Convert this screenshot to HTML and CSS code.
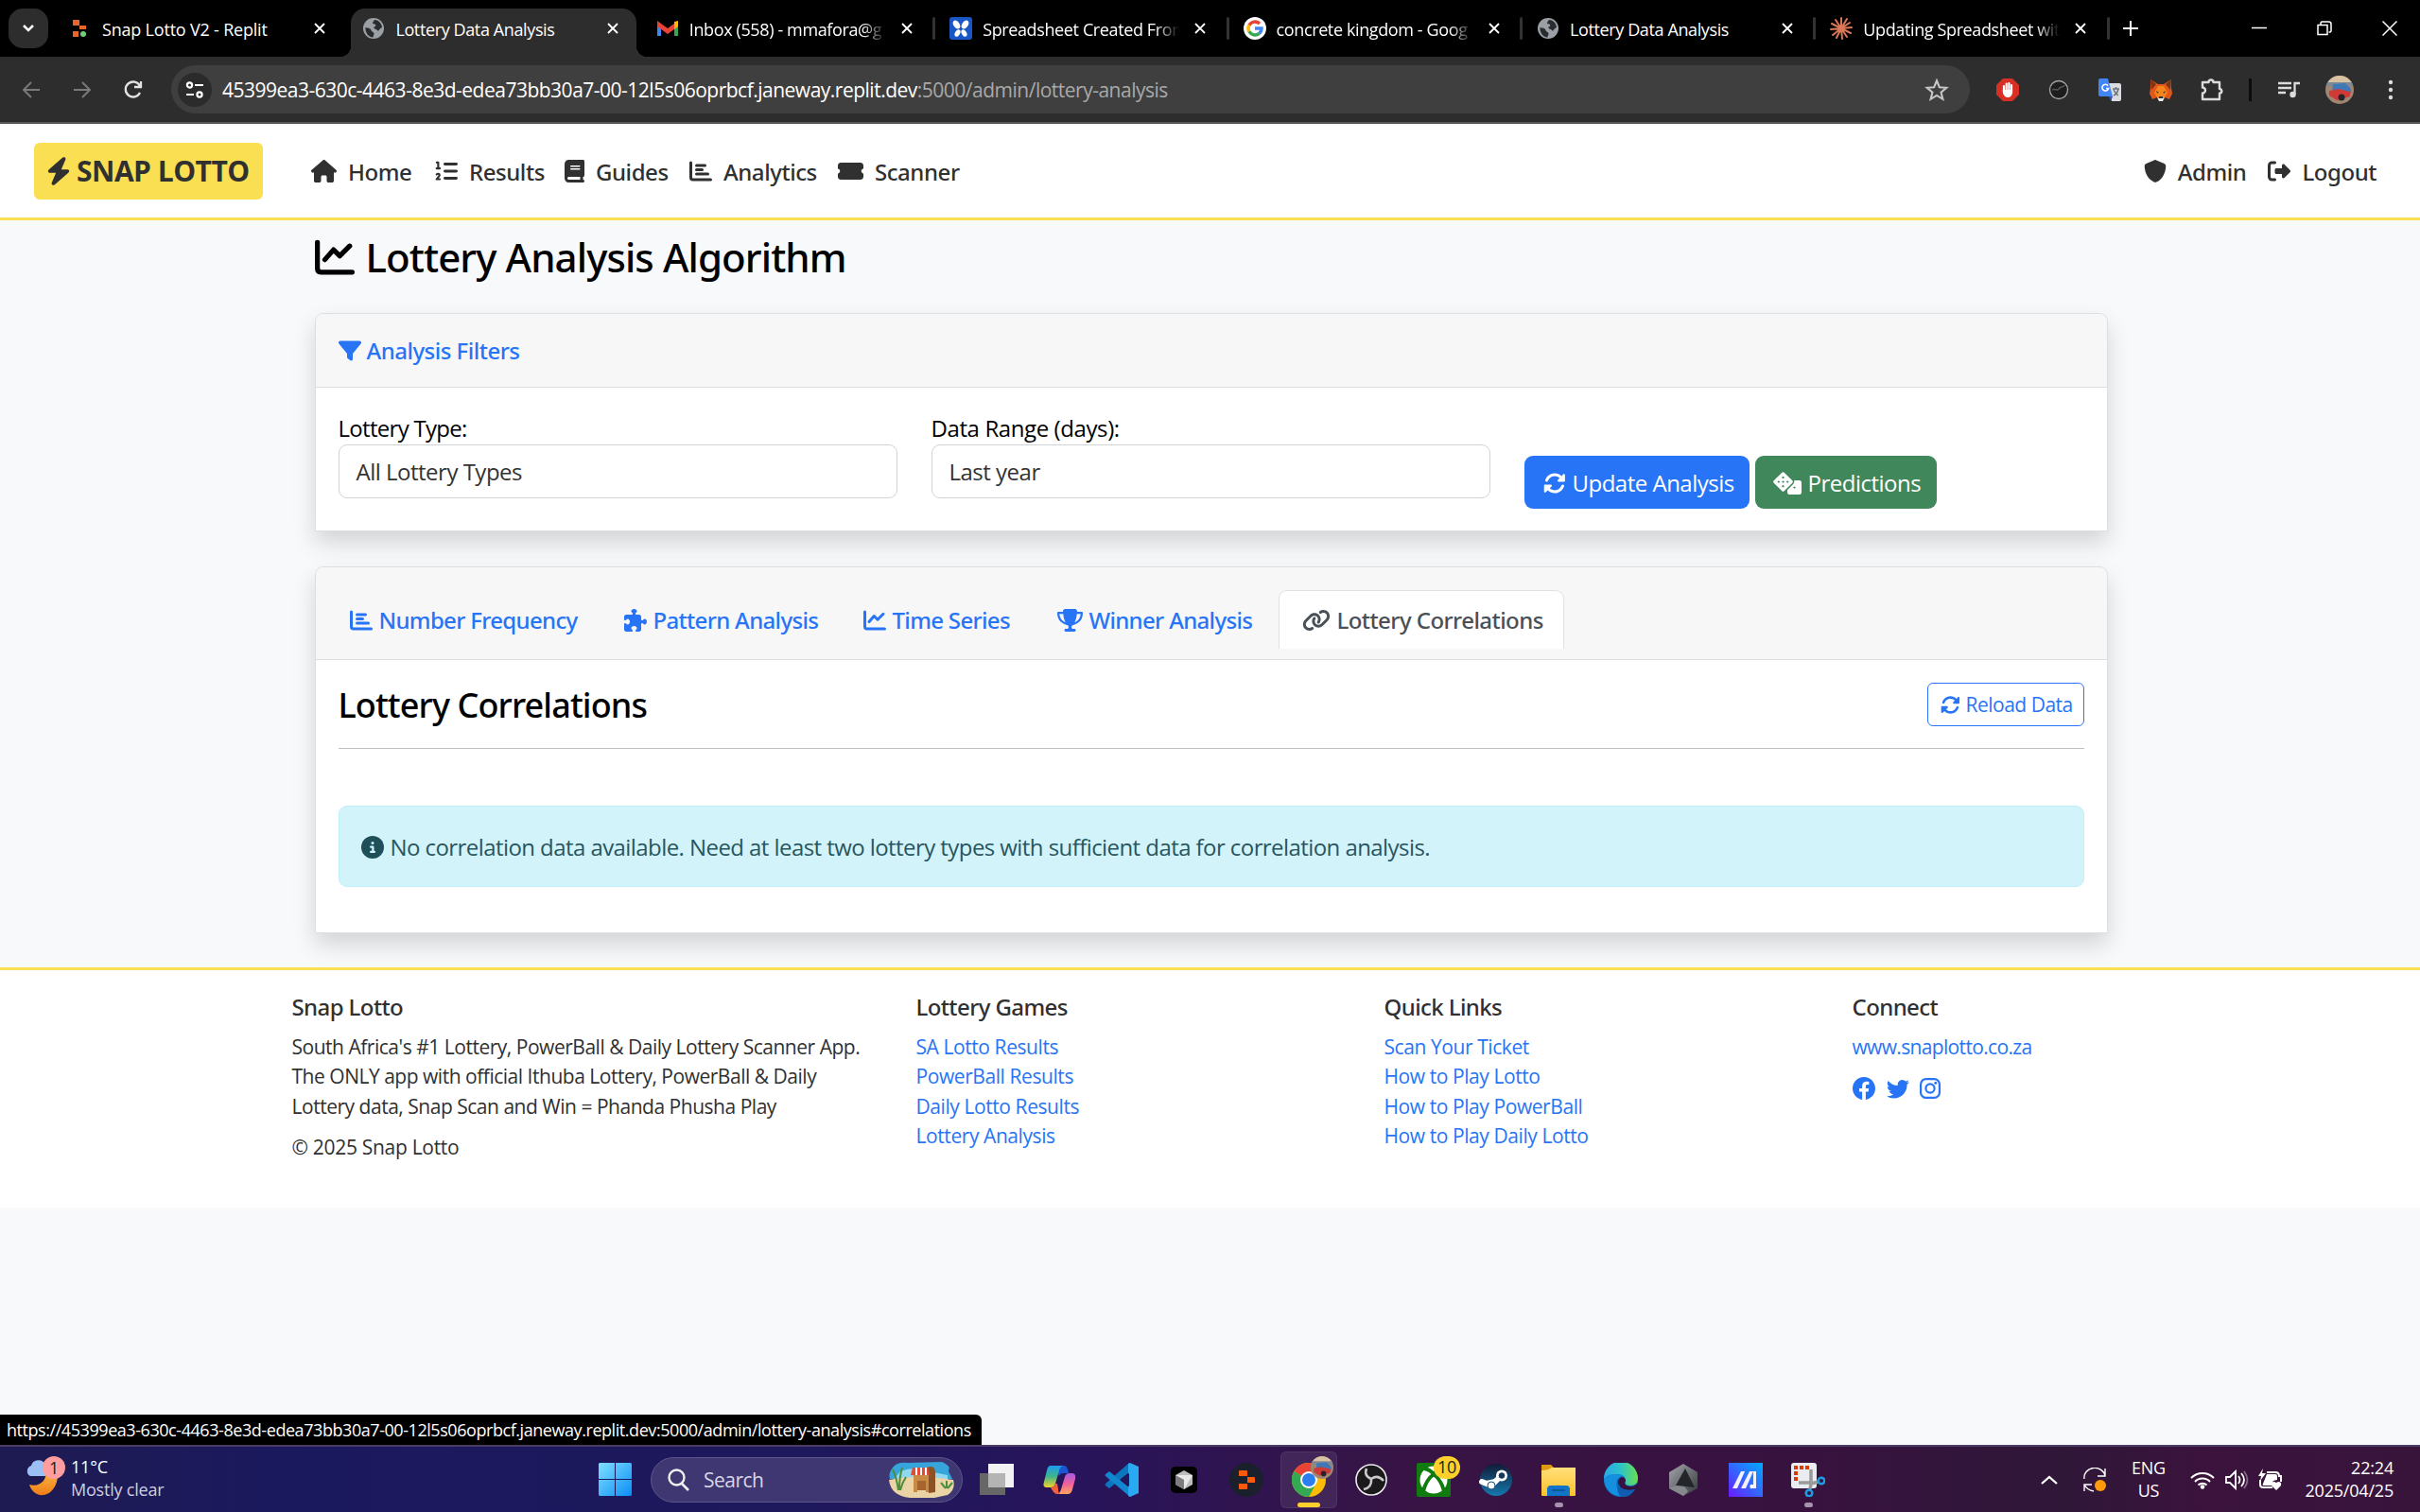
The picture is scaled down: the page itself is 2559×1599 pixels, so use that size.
FILE: index.html
```html
<!DOCTYPE html>
<html lang="en">
<head>
<meta charset="utf-8">
<title>Lottery Data Analysis</title>
<link rel="stylesheet" href="styles.css">
</head>
<body>
<svg class="defs" aria-hidden="true">
  <defs>
    <linearGradient id="g-win" x1="0" y1="0" x2="1" y2="1"><stop offset="0" stop-color="#7fe0ff"/><stop offset="1" stop-color="#0a8ef5"/></linearGradient>
    <linearGradient id="g-moon" x1="0" y1="0" x2="0" y2="1"><stop offset="0" stop-color="#fdc04a"/><stop offset="1" stop-color="#ee7d18"/></linearGradient>
    <linearGradient id="g-cop1" x1="0" y1="0" x2="0" y2="1"><stop offset="0" stop-color="#1b9df0"/><stop offset=".5" stop-color="#3fb68a"/><stop offset="1" stop-color="#f2d328"/></linearGradient>
    <linearGradient id="g-cop2" x1="0" y1="0" x2="0" y2="1"><stop offset="0" stop-color="#a55ae8"/><stop offset=".5" stop-color="#f0609e"/><stop offset="1" stop-color="#ffa35c"/></linearGradient>
    <linearGradient id="g-folder" x1="0" y1="0" x2="0" y2="1"><stop offset="0" stop-color="#ffe07a"/><stop offset="1" stop-color="#ffc02a"/></linearGradient>
    <linearGradient id="g-edge" x1="0" y1="0" x2="1" y2="0"><stop offset="0" stop-color="#2aa7e8"/><stop offset=".5" stop-color="#2cc3c8"/><stop offset="1" stop-color="#6be04d"/></linearGradient>
    <linearGradient id="g-steam" x1="0" y1="0" x2="0" y2="1"><stop offset="0" stop-color="#111b35"/><stop offset="1" stop-color="#1579ad"/></linearGradient>
    <linearGradient id="g-asus" x1="0" y1="1" x2="1" y2="0"><stop offset="0" stop-color="#6a19ff"/><stop offset=".5" stop-color="#3368ff"/><stop offset="1" stop-color="#00aaff"/></linearGradient>
    <linearGradient id="g-arm" x1="0" y1="0" x2="1" y2="1"><stop offset="0" stop-color="#a4a8ad"/><stop offset="1" stop-color="#34373b"/></linearGradient>
    <symbol id="bolt" viewBox="0 0 448 512"><path d="M349.4 44.6c5.900-13.700 1.500-29.700-10.600-38.500s-28.600-8-39.900 1.800l-256 224c-10 8.800-13.600 22.900-8.900 35.300S50.700 288 64 288H175.500L98.600 467.400c-5.900 13.700-1.500 29.700 10.600 38.500s28.600 8 39.900-1.800l256-224c10-8.800 13.600-22.900 8.900-35.300s-16.600-20.700-30-20.700H272.500L349.400 44.600z"/></symbol>
    <symbol id="home" viewBox="0 0 576 512"><path d="M575.8 255.5c0 18-15 32.100-32 32.100h-32l.7 160.200c0 2.700-.2 5.400-.5 8.100V472c0 22.100-17.900 40-40 40H392c-22.100 0-40-17.900-40-40V384c0-17.700-14.300-32-32-32H256c-17.700 0-32 14.300-32 32v88c0 22.100-17.900 40-40 40H104c-22.100 0-40-17.900-40-40V287.600H32c-18 0-32-14-32-32.100c0-9 3-17 10-24L266.400 8c7-7 15-8 22-8s15 2 21 7L564.800 231.500c8 7 12 15 11 24z"/></symbol>
    <symbol id="list" viewBox="0 0 512 512"><g fill="none" stroke="currentColor" stroke-linecap="round" stroke-linejoin="round"><path stroke-width="62" d="M223 96h257M223 256h257M223 416h257"/><path stroke-width="46" d="M40 60h32v128M36 194h74M38 330c14-22 66-20 64 14c0 26-44 58-66 94h72"/></g></symbol>
    <symbol id="book" viewBox="0 0 448 512"><path fill-rule="evenodd" d="M96 0C43 0 0 43 0 96V416c0 53 43 96 96 96H416c17.700 0 32-14.300 32-32s-14.300-32-32-32V384c17.700 0 32-14.300 32-32V32c0-17.700-14.300-32-32-32H96zm0 384H352v64H96c-17.700 0-32-14.300-32-32s14.300-32 32-32zm48-256H336a16 16 0 0 1 0 32H144a16 16 0 0 1 0-32zm0 64H336a16 16 0 0 1 0 32H144a16 16 0 0 1 0-32z"/></symbol>
    <symbol id="bars" viewBox="0 0 512 512"><path fill="none" stroke="currentColor" stroke-width="64" stroke-linecap="round" stroke-linejoin="round" d="M32 64V400q0 48 48 48H480M160 128H352M160 224H288M160 320H416"/></symbol>
    <symbol id="line" viewBox="0 0 512 512"><path fill="none" stroke="currentColor" stroke-width="64" stroke-linecap="round" stroke-linejoin="round" d="M32 64V400q0 48 48 48H480M128 288L240 160L320 240L448 112"/></symbol>
    <symbol id="ticket" viewBox="0 0 576 512"><path d="M64 64C28.700 64 0 92.700 0 128v64c0 8.800 7.400 15.700 15.700 18.600C34.500 217.100 48 235 48 256s-13.500 38.900-32.300 45.400C7.400 304.300 0 311.200 0 320v64c0 35.300 28.700 64 64 64H512c35.300 0 64-28.700 64-64V320c0-8.800-7.400-15.700-15.700-18.600C541.500 294.900 528 277 528 256s13.500-38.900 32.300-45.400c8.300-2.900 15.700-9.800 15.700-18.600V128c0-35.300-28.700-64-64-64H64z"/></symbol>
    <symbol id="shield" viewBox="0 0 512 512"><path d="M256 0c4.600 0 9.200 1 13.400 2.900L457.700 82.800c22 9.300 38.400 31 38.300 57.200c-.5 99.200-41.300 280.700-213.600 363.200c-16.700 8-36.100 8-52.800 0C57.300 420.700 16.500 239.200 16 140c-.1-26.200 16.300-47.900 38.300-57.200L242.700 2.900C246.800 1 251.400 0 256 0z"/></symbol>
    <symbol id="signout" viewBox="0 0 512 512"><path d="M377.900 105.900L500.700 228.700c7.200 7.200 11.300 17.100 11.300 27.300s-4.100 20.100-11.300 27.300L377.900 406.100c-6.400 6.400-15 9.900-24 9.900c-18.700 0-33.900-15.200-33.900-33.900V320H192c-17.700 0-32-14.300-32-32v-64c0-17.700 14.300-32 32-32h128v-62.100c0-18.700 15.200-33.900 33.900-33.900c9 0 17.600 3.600 24 9.900zM160 96H96c-17.700 0-32 14.300-32 32v256c0 17.700 14.300 32 32 32h64c17.700 0 32 14.300 32 32s-14.300 32-32 32H96c-53 0-96-43-96-96V128C0 75 43 32 96 32h64c17.700 0 32 14.300 32 32s-14.300 32-32 32z"/></symbol>
    <symbol id="filter" viewBox="0 0 512 512"><path d="M3.900 54.900C10.500 40.900 24.500 32 40 32H472c15.500 0 29.500 8.900 36.100 22.900s4.600 30.500-5.200 42.500L320 320.900V448c0 12.100-6.800 23.200-17.700 28.600s-23.800 4.300-33.500-3l-64-48c-8.100-6-12.800-15.500-12.800-25.600V320.900L9 97.300C-.7 85.400-2.800 68.800 3.900 54.900z"/></symbol>
    <symbol id="sync" viewBox="0 0 512 512"><path d="M142.900 142.900c62.200-62.200 162.700-62.500 225.300-1L327 183c-6.900 6.900-8.900 17.200-5.200 26.200s12.500 14.800 22.200 14.800H464c13.300 0 24-10.700 24-24V72c0-9.700-5.800-18.500-14.800-22.200s-19.300-1.700-26.200 5.200L413.400 96.600c-87.600-86.500-228.700-86.200-315.800 1C73.200 122 55.600 150.700 44.800 181.400c-5.900 16.700 2.900 34.900 19.500 40.800s34.900-2.900 40.800-19.500c7.700-21.800 20.200-42.300 37.800-59.800zM16 312V440c0 9.700 5.800 18.500 14.800 22.200s19.300 1.700 26.200-5.200l41.600-41.600c87.600 86.500 228.700 86.200 315.800-1c24.400-24.400 42.100-53.100 52.900-83.700c5.900-16.700-2.900-34.900-19.500-40.800s-34.900 2.900-40.800 19.500c-7.700 21.800-20.200 42.300-37.800 59.800c-62.200 62.200-162.700 62.500-225.300 1L185 329c6.900-6.900 8.900-17.200 5.200-26.200s-12.500-14.800-22.200-14.800H40c-13.300 0-24 10.700-24 24z"/></symbol>
    <symbol id="dice" viewBox="0 0 640 512"><path fill-rule="evenodd" d="M199 15a36 36 0 0 1 50 0L433 199a36 36 0 0 1 0 50L249 433a36 36 0 0 1-50 0L15 249a36 36 0 0 1 0-50zM224 100a24 24 0 1 0 .1 0zM124 200a24 24 0 1 0 .1 0zM224 200a24 24 0 1 0 .1 0zM324 200a24 24 0 1 0 .1 0zM224 300a24 24 0 1 0 .1 0z"/><path fill-rule="evenodd" d="M474 192H592q48 0 48 48V464q0 48-48 48H368q-48 0-48-48V410L456 272q26-36 18-80zM480 328a24 24 0 1 0 .1 0z"/></symbol>
    <symbol id="puzzle" viewBox="0 0 512 512"><path d="M192 104.800c0-9.200-5.800-17.300-13.200-22.800C167.200 73.300 160 61.300 160 48c0-26.500 28.700-48 64-48s64 21.500 64 48c0 13.300-7.200 25.300-18.800 34c-7.400 5.500-13.200 13.600-13.200 22.800c0 12.800 10.400 23.200 23.200 23.200H336c26.500 0 48 21.500 48 48v56.800c0 12.800 10.400 23.200 23.200 23.200c9.200 0 17.300-5.800 22.800-13.200c8.700-11.600 20.700-18.800 34-18.800c26.500 0 48 28.700 48 64s-21.500 64-48 64c-13.300 0-25.300-7.200-34-18.800c-5.500-7.400-13.600-13.200-22.800-13.200c-12.800 0-23.200 10.400-23.200 23.200V464c0 26.500-21.500 48-48 48H279.200c-12.800 0-23.200-10.400-23.200-23.200c0-9.200 5.800-17.300 13.200-22.800c11.600-8.700 18.800-20.700 18.800-34c0-26.500-28.700-48-64-48s-64 21.500-64 48c0 13.300 7.200 25.300 18.800 34c7.400 5.500 13.200 13.600 13.200 22.800c0 12.800-10.400 23.200-23.200 23.200H48c-26.500 0-48-21.500-48-48V343.200C0 330.400 10.400 320 23.200 320c9.200 0 17.300 5.800 22.800 13.200C54.700 344.800 66.700 352 80 352c26.500 0 48-28.700 48-64s-21.500-64-48-64c-13.300 0-25.300 7.200-34 18.800C40.500 250.200 32.400 256 23.200 256C10.400 256 0 245.600 0 232.800V176c0-26.500 21.500-48 48-48H168.800c12.800 0 23.200-10.400 23.200-23.200z"/></symbol>
    <symbol id="trophy" viewBox="0 0 576 512"><path d="M400 0H176c-26.500 0-48.100 21.800-47.100 48.200c.2 5.300 .4 10.600 .7 15.800H24C10.700 64 0 74.700 0 88c0 92.600 33.500 157 78.500 200.700c44.300 43.100 98.300 64.800 138.100 75.800c23.400 6.500 39.400 26 39.400 45.600c0 20.900-17 37.900-37.900 37.900H192c-17.700 0-32 14.300-32 32s14.300 32 32 32H384c17.700 0 32-14.300 32-32s-14.300-32-32-32H357.900C337 448 320 431 320 410.100c0-19.600 15.900-39.200 39.400-45.600c39.900-11 93.900-32.700 138.200-75.800C542.500 245 576 180.600 576 88c0-13.300-10.700-24-24-24H446.400c.3-5.200 .5-10.400 .7-15.800C448.100 21.800 426.500 0 400 0zM48.900 112h84.400c9.100 90.100 29.200 150.300 51.900 190.600c-24.900-11-50.800-26.500-73.200-48.300c-32-31.100-58-76-63-142.300zM464.100 254.300c-22.400 21.800-48.300 37.300-73.200 48.300c22.700-40.300 42.800-100.500 51.900-190.600h84.400c-5.100 66.300-31.100 111.200-63 142.300z"/></symbol>
    <symbol id="link" viewBox="0 0 640 512"><path d="M579.800 267.700c56.500-56.500 56.500-148 0-204.500c-50-50-128.800-56.500-186.300-15.400l-1.600 1.100c-14.400 10.300-17.700 30.300-7.400 44.600s30.300 17.700 44.600 7.400l1.600-1.100c32.100-22.900 76-19.300 103.800 8.600c31.500 31.500 31.500 82.500 0 114L422.300 334.800c-31.500 31.500-82.500 31.500-114 0c-27.900-27.900-31.500-71.800-8.600-103.800l1.100-1.600c10.300-14.400 6.900-34.400-7.400-44.600s-34.400-6.900-44.600 7.400l-1.100 1.600C206.500 251.200 213 330 263 380c56.500 56.500 148 56.500 204.500 0L579.800 267.700zM60.200 244.300c-56.500 56.500-56.500 148 0 204.500c50 50 128.800 56.500 186.300 15.400l1.600-1.100c14.400-10.300 17.700-30.300 7.400-44.600s-30.300-17.700-44.600-7.400l-1.600 1.100c-32.100 22.900-76 19.300-103.800-8.600C74 372 74 321 105.500 289.500L217.700 177.200c31.500-31.500 82.500-31.500 114 0c27.900 27.900 31.500 71.800 8.600 103.900l-1.100 1.600c-10.300 14.400-6.900 34.400 7.400 44.600s34.400 6.900 44.600-7.400l1.100-1.600C433.500 260.800 427 182 377 132c-56.500-56.500-148-56.500-204.500 0L60.200 244.300z"/></symbol>
    <symbol id="info" viewBox="0 0 512 512"><circle cx="256" cy="256" r="256"/><circle cx="256" cy="160" r="32" fill="#d3f3fa"/><path d="M216 248h48v112M216 360h80" fill="none" stroke="#d3f3fa" stroke-width="48" stroke-linecap="round" stroke-linejoin="round"/></symbol>
    <symbol id="globe" viewBox="0 0 24 24"><circle cx="12" cy="12" r="11" fill="#9aa0a6"/><path fill="#2b2c2e" d="M13 3c4 0 7.500 3.500 8 8-2 1-3 2-4 4-1-2-4-2-5-4 1-1 3-1 2-3-1-1-3 0-3-2zM3.500 11c2 1 5 0 6 3 0 2 3 1 3 4 0 1-1 2-1 3.500-5-.5-8.500-5-8-10.500z"/></symbol>
    <symbol id="x" viewBox="0 0 12 12"><path d="M1 1l10 10M11 1L1 11" stroke="currentColor" stroke-width="1.800" fill="none"/></symbol>
  </defs>
</svg>

<div class="tabstrip">
  <button class="tab-search"><svg width="14" height="10" viewBox="0 0 14 10"><path d="M2 2l5 5 5-5" fill="none" stroke="#fff" stroke-width="2.500"/></svg></button>
  <div class="tabs">
    <div class="tab first"><svg class="fav" viewBox="0 0 24 24"><path fill="#e8662b" d="M4 3h7v6H4zM11 9h7v4h-7zM4 15h6v6H4z"/><circle cx="15" cy="18" r="3" fill="#6fcf7d"/></svg><span class="t">Snap Lotto V2 - Replit</span><svg class="close"><use href="#x"/></svg></div>
    <div class="tab active"><svg class="fav"><use href="#globe"/></svg><span class="t">Lottery Data Analysis</span><svg class="close"><use href="#x"/></svg></div>
    <div class="tab sep"><svg class="fav" viewBox="0 0 24 24"><path fill="#4285f4" d="M1 6v14h4V10z"/><path fill="#34a853" d="M23 6v14h-4V10z"/><path fill="#ea4335" d="M1 4l11 8L23 4v6l-11 8L1 10z"/><path fill="#fbbc04" d="M19 5l4-1v6l-4 3z"/></svg><span class="t fade">Inbox (558) - mmafora@g</span><svg class="close"><use href="#x"/></svg></div>
    <div class="tab sep"><svg class="fav" viewBox="0 0 24 24"><rect width="24" height="24" rx="3" fill="#1a56c4"/><g fill="#fff"><ellipse cx="7.500" cy="8" rx="3.200" ry="5" transform="rotate(-35 7.500 8)"/><ellipse cx="16.500" cy="8" rx="3.200" ry="5" transform="rotate(35 16.500 8)"/><ellipse cx="8.500" cy="17" rx="2.600" ry="4" transform="rotate(30 8.500 17)"/><ellipse cx="15.500" cy="17" rx="2.600" ry="4" transform="rotate(-30 15.500 17)"/></g></svg><span class="t fade">Spreadsheet Created From</span><svg class="close"><use href="#x"/></svg></div>
    <div class="tab sep"><svg class="fav" viewBox="0 0 24 24"><circle cx="12" cy="12" r="12" fill="#fff"/><g fill="none" stroke-width="3.400"><path stroke="#ea4335" d="M6 8.600A7 7 0 0 1 17 7"/><path stroke="#fbbc04" d="M6 15.600A7 7 0 0 1 6 8.400"/><path stroke="#34a853" d="M16.500 17.400A7 7 0 0 1 6 15.400"/><path stroke="#4285f4" d="M12 12h7a7 7 0 0 1-2.600 5.500"/></g></svg><span class="t fade">concrete kingdom - Goog</span><svg class="close"><use href="#x"/></svg></div>
    <div class="tab sep"><svg class="fav"><use href="#globe"/></svg><span class="t">Lottery Data Analysis</span><svg class="close"><use href="#x"/></svg></div>
    <div class="tab sep"><svg class="fav" viewBox="0 0 24 24"><path stroke="#d97757" stroke-width="2" stroke-linecap="round" d="M12 12V1M12 12l6-10M12 12l9-6M12 12l11-1M12 12l10 5M12 12l6 9M12 12l1 11M12 12l-5 10M12 12l-9 7M12 12L1 13M12 12L2 7M12 12L6 3"/></svg><span class="t fade">Updating Spreadsheet wit</span><svg class="close"><use href="#x"/></svg></div>
  </div>
  <svg class="plus" viewBox="0 0 16 16"><path d="M8 0v16M0 8h16" stroke="#fff" stroke-width="2"/></svg>
  <div class="winctl">
    <svg viewBox="0 0 16 16"><path d="M0 7.500h16" stroke="#fff" stroke-width="1.500"/></svg>
    <svg viewBox="0 0 16 16"><path d="M1 4.500h10v10H1zM4 4V2.500q0-1.500 1.500-1.500h7q2.500 0 2.500 2.500v7q0 1.500-1.500 1.500h-1" fill="none" stroke="#fff" stroke-width="1.500"/></svg>
    <svg viewBox="0 0 16 16"><path d="M.5.5l15 15M15.500.5l-15 15" stroke="#fff" stroke-width="1.500"/></svg>
  </div>
</div>

<div class="toolbar">
  <div class="nav-btns">
    <svg class="dim" width="20" height="20" viewBox="0 0 20 20"><path d="M19 10H2M10 2l-8 8 8 8" fill="none" stroke="currentColor" stroke-width="2"/></svg>
    <svg class="dim" width="20" height="20" viewBox="0 0 20 20"><path d="M1 10h17M10 2l8 8-8 8" fill="none" stroke="currentColor" stroke-width="2"/></svg>
    <svg width="20" height="20" viewBox="0 0 20 20"><path d="M17 13a8 8 0 1 1 0-7M18 1v6h-7" fill="none" stroke="#e3e3e3" stroke-width="2.300"/></svg>
  </div>
  <div class="urlbar">
    <span class="site"><svg width="20" height="20" viewBox="0 0 20 20"><g fill="none" stroke="#fff" stroke-width="2.200"><circle cx="4.500" cy="5" r="2.600"/><path d="M10 5h9M1 15h8"/><circle cx="15" cy="15" r="2.600"/></g></svg></span>
    <span class="url">45399ea3-630c-4463-8e3d-edea73bb30a7-00-12l5s06oprbcf.janeway.replit.dev<i>:5000/admin/lottery-analysis</i></span>
    <svg class="star" viewBox="0 0 24 24"><path d="M12 3l2.600 6.400 6.900.5-5.300 4.500 1.700 6.700L12 17.400l-5.900 3.700 1.700-6.700L2.500 9.900l6.900-.5z" fill="none" stroke="#c7c7c7" stroke-width="1.900"/></svg>
  </div>
  <div class="exts">
    <svg viewBox="0 0 24 24"><path fill="#d93025" d="M7 0h10l7 7v10l-7 7H7l-7-7V7z"/><path fill="none" stroke="#fff" stroke-width="2.200" stroke-linecap="round" d="M8 14V8M10.700 12V5.500M13.400 12V5M16 13V7"/><path fill="#fff" d="M6.900 12h10.200v3q-1 5-5 5-4 0-5.200-5z"/></svg>
    <svg viewBox="0 0 24 24"><circle cx="12" cy="12" r="9.500" fill="#1d1d1d" stroke="#a5a5a5" stroke-width="1.300"/><path d="M5 12c3-2 5 2 7-1s5-1 6-4" fill="none" stroke="#555" stroke-width="1.500"/></svg>
    <svg viewBox="0 0 24 24"><path fill="#dadce0" d="M9 5h13q2 0 2 2v15q0 2-2 2h-8z"/><path fill="#4285f4" d="M2 0h8l5 19H2q-2 0-2-2V2q0-2 2-2z"/><path fill="#3350b8" d="M11 19h4l-2 5z"/><path fill="none" stroke="#fff" stroke-width="1.600" d="M10 7.500a3.400 3.400 0 1 0 .6 3H8"/><path fill="none" stroke="#6a7278" stroke-width="1.500" d="M15 11h7M18.500 9v2M21 11q-1 5-5 7M16 12q2 4 5 6"/></svg>
    <svg viewBox="0 0 24 24"><path fill="#e2571b" d="M1 1l8 5h6l8-5v9l1 6-3 6-5-2-2 2H10l-2-2-5 2-3-6 1-6z"/><path fill="#7b3414" d="M1 1l6 5-5 6zM23 1l-6 5 5 6z"/><path fill="#f6851b" d="M9 8h6l4 7-3 5H8l-3-5z"/><path fill="#233447" d="M7 13l3 2-2 .5zM17 13l-3 2 2 .5zM10 19h4v2h-4z"/><path fill="#eee" d="M8 20l2 1h4l2-1-2 4h-4z"/></svg>
    <svg viewBox="0 0 24 24"><path fill="none" stroke="#dcdcdc" stroke-width="2.400" stroke-linejoin="round" d="M2 4h6.500a2.500 2.500 0 0 1 5 0H20v7a2.300 2.300 0 0 1 0 4.600V22H2v-6.500a3 3 0 0 0 0-6z"/></svg>
    <span class="vr"></span>
    <svg viewBox="0 0 24 24"><path fill="none" stroke="#dcdcdc" stroke-width="2.300" d="M1 5h14M1 10h14M1 15h8M18.500 17V5H24"/><circle cx="16.500" cy="17" r="3.200" fill="#dcdcdc"/></svg>
    <span class="avatar"><svg viewBox="0 0 30 30"><rect width="30" height="30" fill="#a08672"/><path fill="#d9c2a3" d="M0 0h30v7H0z"/><path fill="#7d8a96" d="M0 7h30v4H0z"/><path fill="#3f78b8" d="M8 9l13-1 6 6v5H7z"/><path fill="#cf3a36" d="M4 16l10-2 12 3v5l-14 4-8-5z"/><circle cx="17" cy="23" r="3.500" fill="#26242a"/><path fill="#4e403c" d="M0 20l9 10H0z"/></svg></span>
    <svg viewBox="0 0 24 24"><g fill="#dcdcdc"><circle cx="12" cy="4" r="2.200"/><circle cx="12" cy="12" r="2.200"/><circle cx="12" cy="20" r="2.200"/></g></svg>
  </div>
</div>

<div class="page">
  <header class="site-header">
    <a class="brand"><svg width="26" height="30"><use href="#bolt"/></svg><span>SNAP LOTTO</span></a>
    <nav class="mainnav">
      <a><svg width="27" height="24"><use href="#home"/></svg><span>Home</span></a>
      <a><svg width="24" height="24"><use href="#list"/></svg><span>Results</span></a>
      <a><svg width="21" height="24"><use href="#book"/></svg><span>Guides</span></a>
      <a><svg width="24" height="24"><use href="#bars"/></svg><span>Analytics</span></a>
      <a><svg width="27" height="24"><use href="#ticket"/></svg><span>Scanner</span></a>
    </nav>
    <nav class="usernav">
      <a><svg width="24" height="24"><use href="#shield"/></svg><span>Admin</span></a>
      <a><svg width="24" height="24"><use href="#signout"/></svg><span>Logout</span></a>
    </nav>
  </header>

  <main>
    <h1><svg width="42" height="42"><use href="#line"/></svg>Lottery Analysis Algorithm</h1>
    <section class="card filters">
      <div class="card-head"><svg width="24" height="24"><use href="#filter"/></svg>Analysis Filters</div>
      <div class="card-body">
        <div class="field"><label class="l1">Lottery Type:</label><div class="select">All Lottery Types</div></div>
        <div class="field"><label>Data Range (days):</label><div class="select">Last year</div></div>
        <div class="btns">
          <button class="btn blue"><svg width="24" height="24"><use href="#sync"/></svg>Update Analysis</button>
          <button class="btn green"><svg width="30" height="24"><use href="#dice"/></svg>Predictions</button>
        </div>
      </div>
    </section>
    <section class="card results">
      <div class="card-tabs">
        <a><svg width="24" height="24"><use href="#bars"/></svg>Number Frequency</a>
        <a><svg width="24" height="24"><use href="#puzzle"/></svg>Pattern Analysis</a>
        <a><svg width="24" height="24"><use href="#line"/></svg>Time Series</a>
        <a><svg width="27" height="24"><use href="#trophy"/></svg>Winner Analysis</a>
        <a class="on"><svg width="30" height="24"><use href="#link"/></svg>Lottery Correlations</a>
      </div>
      <div class="result-head"><h2>Lottery Correlations</h2><button class="reload"><svg width="21" height="21"><use href="#sync"/></svg>Reload Data</button></div>
      <div class="alert"><svg width="24" height="24"><use href="#info"/></svg>No correlation data available. Need at least two lottery types with sufficient data for correlation analysis.</div>
    </section>
  </main>

  <footer>
    <div class="cols">
      <div><h3>Snap Lotto</h3><p>South Africa's #1 Lottery, PowerBall &amp; Daily Lottery Scanner App.<br>The ONLY app with official Ithuba Lottery, PowerBall &amp; Daily<br>Lottery data, Snap Scan and Win = Phanda Phusha Play</p><p class="copy">© 2025 Snap Lotto</p></div>
      <div><h3>Lottery Games</h3><a>SA Lotto Results</a><a>PowerBall Results</a><a>Daily Lotto Results</a><a>Lottery Analysis</a></div>
      <div><h3>Quick Links</h3><a>Scan Your Ticket</a><a>How to Play Lotto</a><a>How to Play PowerBall</a><a>How to Play Daily Lotto</a></div>
      <div><h3>Connect</h3><a class="www">www.snaplotto.co.za</a>
        <div class="social">
          <svg viewBox="0 0 16 16"><path d="M16 8.049c0-4.446-3.582-8.050-8-8.050C3.580 0-.002 3.603-.002 8.050c0 4.017 2.926 7.347 6.750 7.951v-5.625h-2.030V8.050H6.750V6.275c0-2.017 1.195-3.131 3.022-3.131.876 0 1.791.157 1.791.157v1.980h-1.009c-.993 0-1.303.621-1.303 1.258v1.510h2.218l-.354 2.326H9.250V16c3.824-.604 6.750-3.934 6.750-7.951"/></svg>
          <svg viewBox="0 0 16 16"><path d="M5.026 15c6.038 0 9.341-5.003 9.341-9.334q.002-.211-.006-.422A6.700 6.700 0 0 0 16 3.542a6.700 6.700 0 0 1-1.889.518 3.300 3.300 0 0 0 1.447-1.817 6.500 6.500 0 0 1-2.087.793A3.286 3.286 0 0 0 7.875 6.030a9.320 9.320 0 0 1-6.767-3.429 3.290 3.290 0 0 0 1.018 4.382A3.300 3.300 0 0 1 .640 6.575v.045a3.290 3.290 0 0 0 2.632 3.218 3.200 3.200 0 0 1-.865.115 3 3 0 0 1-.614-.057 3.280 3.280 0 0 0 3.067 2.277A6.600 6.600 0 0 1 .780 13.580a6 6 0 0 1-.780-.045A9.340 9.340 0 0 0 5.026 15"/></svg>
          <svg class="ig" viewBox="0 0 24 24"><g fill="none" stroke="currentColor" stroke-width="2.200"><rect x="2.100" y="2.100" width="19.800" height="19.800" rx="5.500"/><circle cx="12" cy="12" r="4.600"/></g><circle cx="17.800" cy="6.200" r="1.500"/></svg>
        </div>
      </div>
    </div>
  </footer>
  <div class="status">https://45399ea3-630c-4463-8e3d-edea73bb30a7-00-12l5s06oprbcf.janeway.replit.dev:5000/admin/lottery-analysis#correlations</div>
</div>

<div class="taskbar">
  <div class="weather">
    <svg width="42" height="42" viewBox="0 0 42 42"><path fill="url(#g-moon)" d="M20 14c8 2 14 10 12-3 4 16-4 29-14 30-7 1-13-4-15-11 10 3 20-4 17-16z"/><path fill="#9cc0f5" d="M4 21a6 6 0 0 1 1-11 8 8 0 0 1 15-1v12z"/><circle cx="29" cy="12" r="12" fill="#ff9d9f"/><text x="29" y="18.500" text-anchor="middle" class="badge-t">1</text></svg>
    <div><b>11°C</b><span>Mostly clear</span></div>
  </div>
  <div class="cell"><svg width="35" height="35" viewBox="0 0 35 35"><path fill="url(#g-win)" d="M1 0h16v17H0V1zM18 0h16l1 1v16H18zM0 18h17v17H1l-1-1zM18 18h17v16l-1 1H18z"/></svg></div>
  <div class="search"><svg width="23" height="24" viewBox="0 0 23 24"><circle cx="9.500" cy="9.500" r="8" fill="none" stroke="#eee" stroke-width="2.400"/><path d="M15 16l7 7" stroke="#eee" stroke-width="2.600"/></svg><span>Search</span>
    <svg class="beach" width="72" height="38" viewBox="0 0 72 38"><path fill="#35a5dc" d="M6 6Q10 0 22 1l36-1q10 4 7 10l4 8H3q-2-6 3-12z"/><path fill="#8fd8ee" d="M14 10q16-6 30 0l20 4v6H6z"/><path fill="#ead3a4" d="M2 19q30-6 68 0 3 10-6 16l-14 3H24Q4 36 2 19z"/><path fill="#c98a45" d="M28 12h16v20h-3V20h-9v12h-4z"/><path fill="#a5652d" d="M32 20h9v10h-9z"/><path fill="#8a5225" d="M42 6q8-3 9 4v22l-7 1V12z"/><path fill="#e34a3a" d="M27 6h16l2 8H25z"/><path stroke="#fff" stroke-width="2" d="M31 6v8M36 6v8M41 6v8"/><path fill="none" stroke="#4d8e3a" stroke-width="2" d="M12 30Q10 16 6 8M13 30q0-14 3-24M14 30q2-8 6-14M62 28l-5-6M63 28v-8M64 28l5-6"/></svg>
  </div>
  <div class="apps">
    <div class="cell"><svg viewBox="0 0 36 36"><path fill="#676767" d="M0 11h27v23H0z"/><path fill="#f2f2f2" d="M9 1h27v25H9z"/><path fill="#b4b4b4" d="M9 11h18v15H9z"/></svg></div>
    <div class="cell"><svg viewBox="0 0 36 36"><path fill="#1a56d6" d="M12 3h11q3 0 4 4l1 4h-6q-3 0-4 3z"/><path fill="url(#g-cop1)" d="M9 3h13q-3 1-4 5l-4 14q-1 4-5 4H5q-5 0-3-6L5 8q1-5 4-5z"/><path fill="url(#g-cop2)" d="M27 33H16q3-1 4-5l4-13q1-4 5-4h3q4 0 3 6l-3 11q-1 5-5 5z"/><path fill="#f2603f" d="M9 26q4 0 5-4l2 0 1 6q0 5 3 5h-5q-3-1-6-7z"/></svg></div>
    <div class="cell"><svg viewBox="0 0 36 36"><path fill="#0a76bd" d="M27 9L5 27l-4-3q-1-1 0-2L26 0z"/><path fill="#1287d1" d="M1 12l4-3 22 18v9L1 14q-1-1 0-2z"/><path fill="#29a9f2" d="M27 0l9 4v28l-9 4-2-1V1z"/><path fill="#24165a" d="M26 11v14l-9-7z"/></svg></div>
    <div class="cell"><svg viewBox="0 0 36 36"><rect x="4" y="4" width="28" height="28" rx="5" fill="#000"/><path fill="#bdbdbd" d="M18 8l9 5v10l-9 5-9-5V13z"/><path fill="#e8e8e8" d="M9 13l18 0-9 15V18z"/><path fill="#7d7d7d" d="M9 13l9 5v10l-9-5z"/></svg></div>
    <div class="cell"><svg viewBox="0 0 36 36"><circle cx="18" cy="18" r="18" fill="#1a202c"/><path fill="#fb5a0a" d="M11 8h7q1 0 1 1v5h-9V9q0-1 1-1zM19 15h7q1 0 1 1v5h-8zM10 22h9v5q0 1-1 1h-7q-1 0-1-1z"/></svg></div>
    <div class="cell chrome"><svg viewBox="0 0 36 36"><circle cx="18" cy="18" r="18" fill="#fbbc05"/><path fill="#ea4335" d="M18 18L2.400 9A18 18 0 0 1 33.600 9z"/><path fill="#34a853" d="M18 18L2.400 9A18 18 0 0 0 18 36l7.500-14z"/><circle cx="18" cy="18" r="9" fill="#fff"/><circle cx="18" cy="18" r="7" fill="#2c7df0"/></svg><span class="mini"><svg viewBox="0 0 30 30"><rect width="30" height="30" fill="#a08672"/><path fill="#d9c2a3" d="M0 0h30v7H0z"/><path fill="#7d8a96" d="M0 7h30v4H0z"/><path fill="#3f78b8" d="M8 9l13-1 6 6v5H7z"/><path fill="#cf3a36" d="M4 16l10-2 12 3v5l-14 4-8-5z"/><circle cx="17" cy="23" r="3.500" fill="#26242a"/></svg></span></div>
    <div class="cell"><svg viewBox="0 0 36 36"><circle cx="18" cy="18" r="16" fill="#1b191c" stroke="#ececec" stroke-width="1.600"/><path fill="none" stroke="#c9c9c9" stroke-width="2.600" d="M18 17Q10 14 13 6M18 17q7-5 13 2M18 17q1 9-8 11"/></svg></div>
    <div class="cell"><svg viewBox="0 0 36 36"><rect width="36" height="36" rx="2" fill="#107c10"/><circle cx="18" cy="18" r="14.500" fill="#fff"/><path fill="none" stroke="#107c10" stroke-width="4" d="M7 30Q10 18 18 12q8 6 11 18M8 6q6 1 10 6 4-5 10-6"/></svg><span class="badge">10</span></div>
    <div class="cell"><svg viewBox="0 0 36 36"><circle cx="18" cy="18" r="17" fill="url(#g-steam)"/><path stroke="#fff" stroke-width="6" stroke-linecap="round" d="M3 20l10 4 8-8"/><circle cx="24" cy="13.500" r="6" fill="#fff"/><circle cx="24" cy="13.500" r="3.800" fill="#16365c" stroke="#fff"/><circle cx="13" cy="24" r="4" fill="#fff" stroke="#17527f"/></svg></div>
    <div class="cell dot"><svg viewBox="0 0 36 36"><path fill="#e09a10" d="M0 2h10l4 4h4v6H0z"/><path fill="url(#g-folder)" d="M0 8q7 0 11-3h25v29q0 1-1 1H1q-1 0-1-1z"/><path fill="#1274c8" d="M6 35v-7q0-4 4-4h16q4 0 4 4v7z"/><path stroke="#0a4f8c" stroke-width="1.500" d="M11 29h14"/></svg></div>
    <div class="cell"><svg viewBox="0 0 36 36"><circle cx="18" cy="18" r="18" fill="#0f6fc6"/><path fill="url(#g-edge)" d="M0 17A18 18 0 0 1 36 16q0 8-8 8-7 0-5-5 0-6-8-7Q4 12 0 17z"/><path fill="#1490df" d="M0 18Q3 11 12 12q5 0 8 2-7 1-7 8 0 9 10 12Q4 38 0 18z"/><path fill="#37123f" d="M23 19q-3 5 5 6 5 0 8-4 2 5-2 7-10 3-17-2-5-6 1-11 5 0 5 4z"/><path fill="#0f5db0" d="M16 22q1 9 17 6-5 9-15 8-6-6-2-14z"/></svg></div>
    <div class="cell"><svg viewBox="0 0 36 36"><path fill="url(#g-arm)" d="M18 1l15 9v17l-15 8-15-8V10z"/><path fill="#232528" d="M20 6l10 20-20-2z"/><path fill="#85898e" d="M3 27l7-3 9 1 4 5-5 5z"/></svg></div>
    <div class="cell"><svg viewBox="0 0 36 36"><path fill="url(#g-asus)" d="M0 0h36v36H0z"/><path fill="#f4f1ff" d="M13 9h4L9 27H4zM22 9h4l-8 18h-5zM26 9h3v18h-3z"/><circle cx="24.500" cy="25" r="2.200" fill="#fff"/></svg></div>
    <div class="cell dot"><svg viewBox="0 0 36 36"><rect width="27" height="27" rx="3" fill="#e9ecf0"/><path fill="#d83b01" d="M3 3h4v4H3zM9 3h4v4H9zM15 3h4v4h-4zM3 9h4v4H3zM3 15h4v4H3z"/><path fill="none" stroke="#9a9a9a" stroke-width="3.500" d="M21 7v14H8M20 28l1-6 8-2"/><g fill="none" stroke="#1b9de2" stroke-width="2.500"><circle cx="32" cy="19" r="3.300"/><circle cx="19" cy="32" r="3.300"/></g></svg></div>
  </div>
  <div class="tray">
    <svg width="18" height="10" viewBox="0 0 18 10"><path d="M1 9l8-7 8 7" fill="none" stroke="#fff" stroke-width="2.300"/></svg>
    <svg width="26" height="26" viewBox="0 0 26 26"><path d="M2 12A11 10 0 0 1 24 9M24 1v8h-8M2 25v-7h8M2 18q3 6 10 7" fill="none" stroke="#fff" stroke-width="1.400"/><circle cx="19" cy="19" r="6" fill="#ff9b0a"/></svg>
    <div class="lang">ENG<br>US</div>
    <svg width="26" height="20" viewBox="0 0 26 20"><g fill="none" stroke="#fff" stroke-width="2"><path d="M1 8a17 17 0 0 1 24 0M5 12a11 11 0 0 1 16 0M8.500 15.500a6.500 6.500 0 0 1 9 0"/></g><circle cx="13" cy="17.500" r="2.300" fill="#fff"/></svg>
    <svg width="26" height="22" viewBox="0 0 26 22"><g fill="none" stroke="#fff" stroke-width="1.800"><path d="M2 8h4l6-6v18l-6-6H2zM15 7q3 4 0 8M18 4q6 7 0 14"/><path stroke="#84688a" d="M21 2q7 9 0 18"/></g></svg>
    <svg width="26" height="24" viewBox="0 0 26 24"><path fill="none" stroke="#fff" stroke-width="2" d="M9 4h9q4 0 4 4h2v6M2 12v5q0 3 3 3h10"/><path fill="#fff" d="M9 6h9q2 0 2 2v4q-6 0-6 6H6q-2 0-1-2zM5 0l-1 5h4l-6 8 1-5H0zM19 23l-5-5q-1-4 3-4l2 1 2-1q4 0 3 4z"/></svg>
    <div class="clock">22:24<br>2025/04/25</div>
  </div>
</div>
</body>
</html>
```
FILE: styles.css
```css
* { box-sizing: border-box; }
body { margin: 0; width: 2559px; height: 1599px; overflow: hidden; display: flex; flex-direction: column; font: 24px/36px "Open Sans", "Noto Sans", sans-serif; letter-spacing: -.5px; color: #000; background: #f8f9fb; white-space: nowrap; }
svg { flex: none; fill: currentColor; display: block; }
.defs { position: absolute; width: 0; height: 0; }
button { font: inherit; letter-spacing: inherit; border: 0; padding: 0; display: flex; align-items: center; color: inherit; }
a { display: flex; align-items: center; }
h1, h2, h3, p { margin: 0; font-weight: 500; }
h1, h2, h3, .mainnav, .usernav, .card-head, .card-tabs { font-family: "Noto Sans", "Open Sans", sans-serif; font-weight: 500; }

.tabstrip { height: 60px; flex: none; background: #000; color: #fff; display: flex; align-items: center; font-size: 18px; letter-spacing: -.38px; }
.tab-search { width: 42px; height: 42px; margin: 0 10px 0 9px; border-radius: 15px; background: #2d2d2d; justify-content: center; }
.tabs { display: flex; height: 60px; }
.tab { width: 310.400px; padding: 0 12px; display: flex; align-items: center; position: relative; }
.tab .fav { width: 24px; height: 24px; margin-right: 11px; }
.tab .t { width: 210px; margin-top: 2px; }
.tab.first .t { letter-spacing: -.2px; }
.tab .fade { mask-image: linear-gradient(90deg, #000 87%, transparent 99%); }
.tab .close { width: 12px; height: 12px; margin-left: 14px; }
.tab.sep::after { content: ""; position: absolute; right: 3px; width: 3px; height: 24px; background: #333; border-radius: 2px; }
.tab.active::before { content: ""; position: absolute; left: 0; right: 9px; top: 9px; bottom: 0; border-radius: 15px 15px 0 0; background: #2d2d2d; }
.tab.active::after { content: ""; position: absolute; left: -12px; right: -3px; bottom: 0; height: 12px; background: radial-gradient(circle at 0 0, transparent 12px, #2d2d2d 12.500px) left / 12px 12px no-repeat, radial-gradient(circle at 100% 0, transparent 12px, #2d2d2d 12.500px) right / 12px 12px no-repeat; }
.tab.active > * { position: relative; }
.plus { width: 16px; height: 16px; margin-left: 11px; }
.winctl { margin-left: auto; margin-right: 24px; display: flex; gap: 53px; }
.winctl svg { width: 16px; height: 16px; }

.toolbar { height: 71px; flex: none; background: #2d2d2d; border-bottom: 2px solid #555; display: flex; align-items: center; padding: 0 4px 0 6px; }
.nav-btns { display: flex; width: 175px; }
.nav-btns svg { margin: 0 17px; color: #eee; }
.nav-btns .dim { color: #7a7a7a; }
.urlbar { width: 1902px; height: 51px; border-radius: 26px; background: #3f3f3f; display: flex; align-items: center; padding: 0 22px 0 7px; font-size: 21px; color: #fff; }
.site { width: 36px; height: 36px; border-radius: 50%; background: #2b2b2b; display: grid; place-items: center; margin-right: 11px; }
.url i { font-style: normal; color: #a9a9a9; }
.star { width: 26px; height: 26px; margin-left: auto; }
.exts { display: grid; grid-template-columns: repeat(5, 54px) 27px repeat(3, 54px); margin-left: 13px; place-items: center; }
.exts > svg { width: 24px; height: 24px; }
.vr { width: 3px; height: 24px; background: #0c0c0c; }
.avatar { width: 30px; height: 30px; border-radius: 50%; overflow: hidden; }

.page { height: 1397px; flex: none; position: relative; background: #f8f9fb; }
.site-header { height: 102px; background: #fff; border-bottom: 3px solid #fcdf52; display: flex; align-items: center; color: #303030; letter-spacing: -.45px; padding: 0 46px 0 36px; }
.brand { width: 242px; height: 60px; border-radius: 6px; background: #fbdf52; font-size: 30px; font-weight: 700; padding-left: 13px; letter-spacing: -.5px; }
.brand svg { margin-right: 6px; }
.mainnav { display: grid; grid-template-columns: 131px 137px 132px 157px auto; margin-left: 51px; }
.mainnav svg, .usernav svg { margin-right: 12px; }
.mainnav span, .usernav span { padding-top: 2px; }
.usernav { display: flex; margin-left: auto; gap: 23px; }

main { width: 1896px; margin: 0 auto; padding-top: 14px; position: relative; left: 1px; }
h1 { font-size: 42px; line-height: 50px; letter-spacing: -.9px; display: flex; align-items: center; }
h1 svg { margin-right: 12px; }
.card { background: #fff; border: 1px solid #dcdee0; border-radius: 9px 9px 0 0; box-shadow: 0 12px 24px rgba(0,0,0,.15); }
.filters { margin-top: 34px; height: 231px; }
.card-head { height: 78px; background: #f7f7f8; border-bottom: 1px solid #dcdee0; border-radius: 9px 9px 0 0; padding-left: 24px; display: flex; align-items: center; color: #2775f6; letter-spacing: -.51px; }
.card-head svg { margin-right: 6px; }
.card-body { display: flex; gap: 36px; padding: 26px 24px 0; }
.field { width: 591px; }
.field label { display: block; line-height: 34px; letter-spacing: -.4px; }
.field .l1 { letter-spacing: -.7px; }
.select { height: 57px; border: 1px solid #cfd4d9; border-radius: 9px; padding: 0 18px; line-height: 56px; color: #333; }
.btns { display: flex; gap: 6px; margin-top: 46px; }
.btn { height: 56px; border-radius: 9px; color: #fff; padding: 2px 0 0 20px; }
.btn svg, .card-tabs svg { margin-right: 7px; }
.blue { background: #2775f6; width: 238px; }
.green { background: #40875b; width: 192px; padding-left: 19px; }

.results { margin-top: 37px; height: 388px; }
.card-tabs { height: 98px; background: #f7f7f8; border-bottom: 1px solid #dcdee0; border-radius: 9px 9px 0 0; display: grid; grid-template-columns: 290px 253px 205px 258px 302px; padding: 24px 12px 0; color: #2775f6; letter-spacing: -.67px; }
.card-tabs a { height: 62px; padding: 1px 0 0 24px; }
.card-tabs .on { background: #fff; border: 1px solid #dee2e6; border-bottom: 0; border-radius: 9px 9px 0 0; color: #495057; letter-spacing: -.56px; padding-top: 0; }
.result-head { margin: 24px 24px 0; height: 70px; border-bottom: 1px solid #bfbfbf; display: flex; justify-content: space-between; align-items: flex-start; }
h2 { font-size: 36px; line-height: 48px; letter-spacing: -.88px; }
.reload { width: 166px; height: 46px; border: 1px solid #2775f6; border-radius: 6px; color: #2775f6; background: #fff; font-size: 21px; letter-spacing: -.5px; padding-left: 13px; }
.reload svg { margin-right: 6px; }
.alert { margin: 60px 24px 0; height: 86px; border: 1px solid #bfeff8; border-radius: 9px; background: #d3f3fa; color: #28565f; display: flex; align-items: center; padding-left: 23px; letter-spacing: -.57px; padding-top: 2px; }
.alert svg { color: #1f4f59; margin-right: 7px; }

footer { margin-top: 36px; height: 254px; background: #fff; border-top: 3px solid #fcdf52; font-size: 21px; line-height: 31.400px; color: #303030; }
.cols { width: 1980px; margin: 0 auto; padding: 21px 0 0 18px; display: grid; grid-template-columns: 660px 495px 495px 312px; position: relative; left: 1px; }
h3 { font-size: 24px; line-height: 36px; letter-spacing: -.6px; margin-bottom: 9px; }
footer p { font-weight: 400; letter-spacing: -.48px; }
.copy { margin-top: 12px; letter-spacing: -.3px; }
footer a { color: #2775f6; letter-spacing: -.42px; }
footer .www { letter-spacing: -.66px; }
.social { display: flex; gap: 12px; margin-top: 16px; color: #2775f6; }
.social svg { width: 24px; height: 24px; }
.social .ig { margin-left: -2px; }
.status { position: absolute; left: 0; bottom: 0; width: 1038px; height: 32px; background: #000; color: #fff; border-radius: 0 6px 0 0; font-size: 18px; line-height: 32px; letter-spacing: -.44px; padding-left: 7px; }

.taskbar { height: 71px; flex: none; border-top: 2px solid #4b3c64; background: linear-gradient(90deg, #1e1b52 0, #1b195e 300px, #1e185c 850px, #28145a 1150px, #371445 1480px, #38123f 1900px, #2f1738 2180px, #3b133d 2330px, #38143b); color: #fff; display: flex; align-items: center; font-size: 18px; letter-spacing: -.2px; line-height: 24px; }
.weather { width: 617px; padding-left: 28px; display: flex; align-items: center; gap: 5px; margin-top: -8px; }
.weather b, .weather span { display: block; font-weight: 400; }
.weather div { margin-top: 5px; }
.weather span { color: #cfcde0; }
.badge-t { font-size: 18px; fill: #222; }
.cell { width: 66px; height: 60px; display: grid; place-items: center; position: relative; flex: none; }
.search { width: 330px; height: 48px; margin: 0 3px 0 5px; border-radius: 24px; background: #3f3772; border: 1px solid #5d5589; display: flex; align-items: center; padding: 0 7px 0 17px; font-size: 21px; color: #d8d6e4; letter-spacing: -.5px; }
.search span { margin: 0 auto 0 15px; }
.apps { display: flex; }
.apps .cell > svg { width: 36px; height: 36px; }
.chrome::before { content: ""; position: absolute; inset: 0 3px; border-radius: 6px; background: rgba(255,255,255,.08); border: 1px solid rgba(255,255,255,.07); }
.chrome > svg { position: relative; }
.chrome::after { content: ""; position: absolute; left: 21px; bottom: 1px; width: 24px; height: 5px; border-radius: 3px; background: #ffcf2b; }
.mini { position: absolute; left: 35px; top: 5px; width: 24px; height: 24px; border-radius: 50%; overflow: hidden; }
.badge { position: absolute; left: 33px; top: 5px; width: 28px; height: 24px; border-radius: 12px; background: #ffd02b; color: #222; text-align: center; line-height: 23px; }
.dot::after { content: ""; position: absolute; left: 29px; bottom: 1px; width: 9px; height: 5px; border-radius: 3px; background: #a893ae; }
.tray { margin-left: auto; width: 416px; display: grid; grid-template-columns: 48px 48px 66px 6px 36px 36px 36px 112px; place-items: center; text-align: center; }
.lang { grid-column: 3 / 5; padding-right: 6px; margin-top: -2px; }
.clock { justify-self: end; text-align: right; margin-top: -2px; }
```
